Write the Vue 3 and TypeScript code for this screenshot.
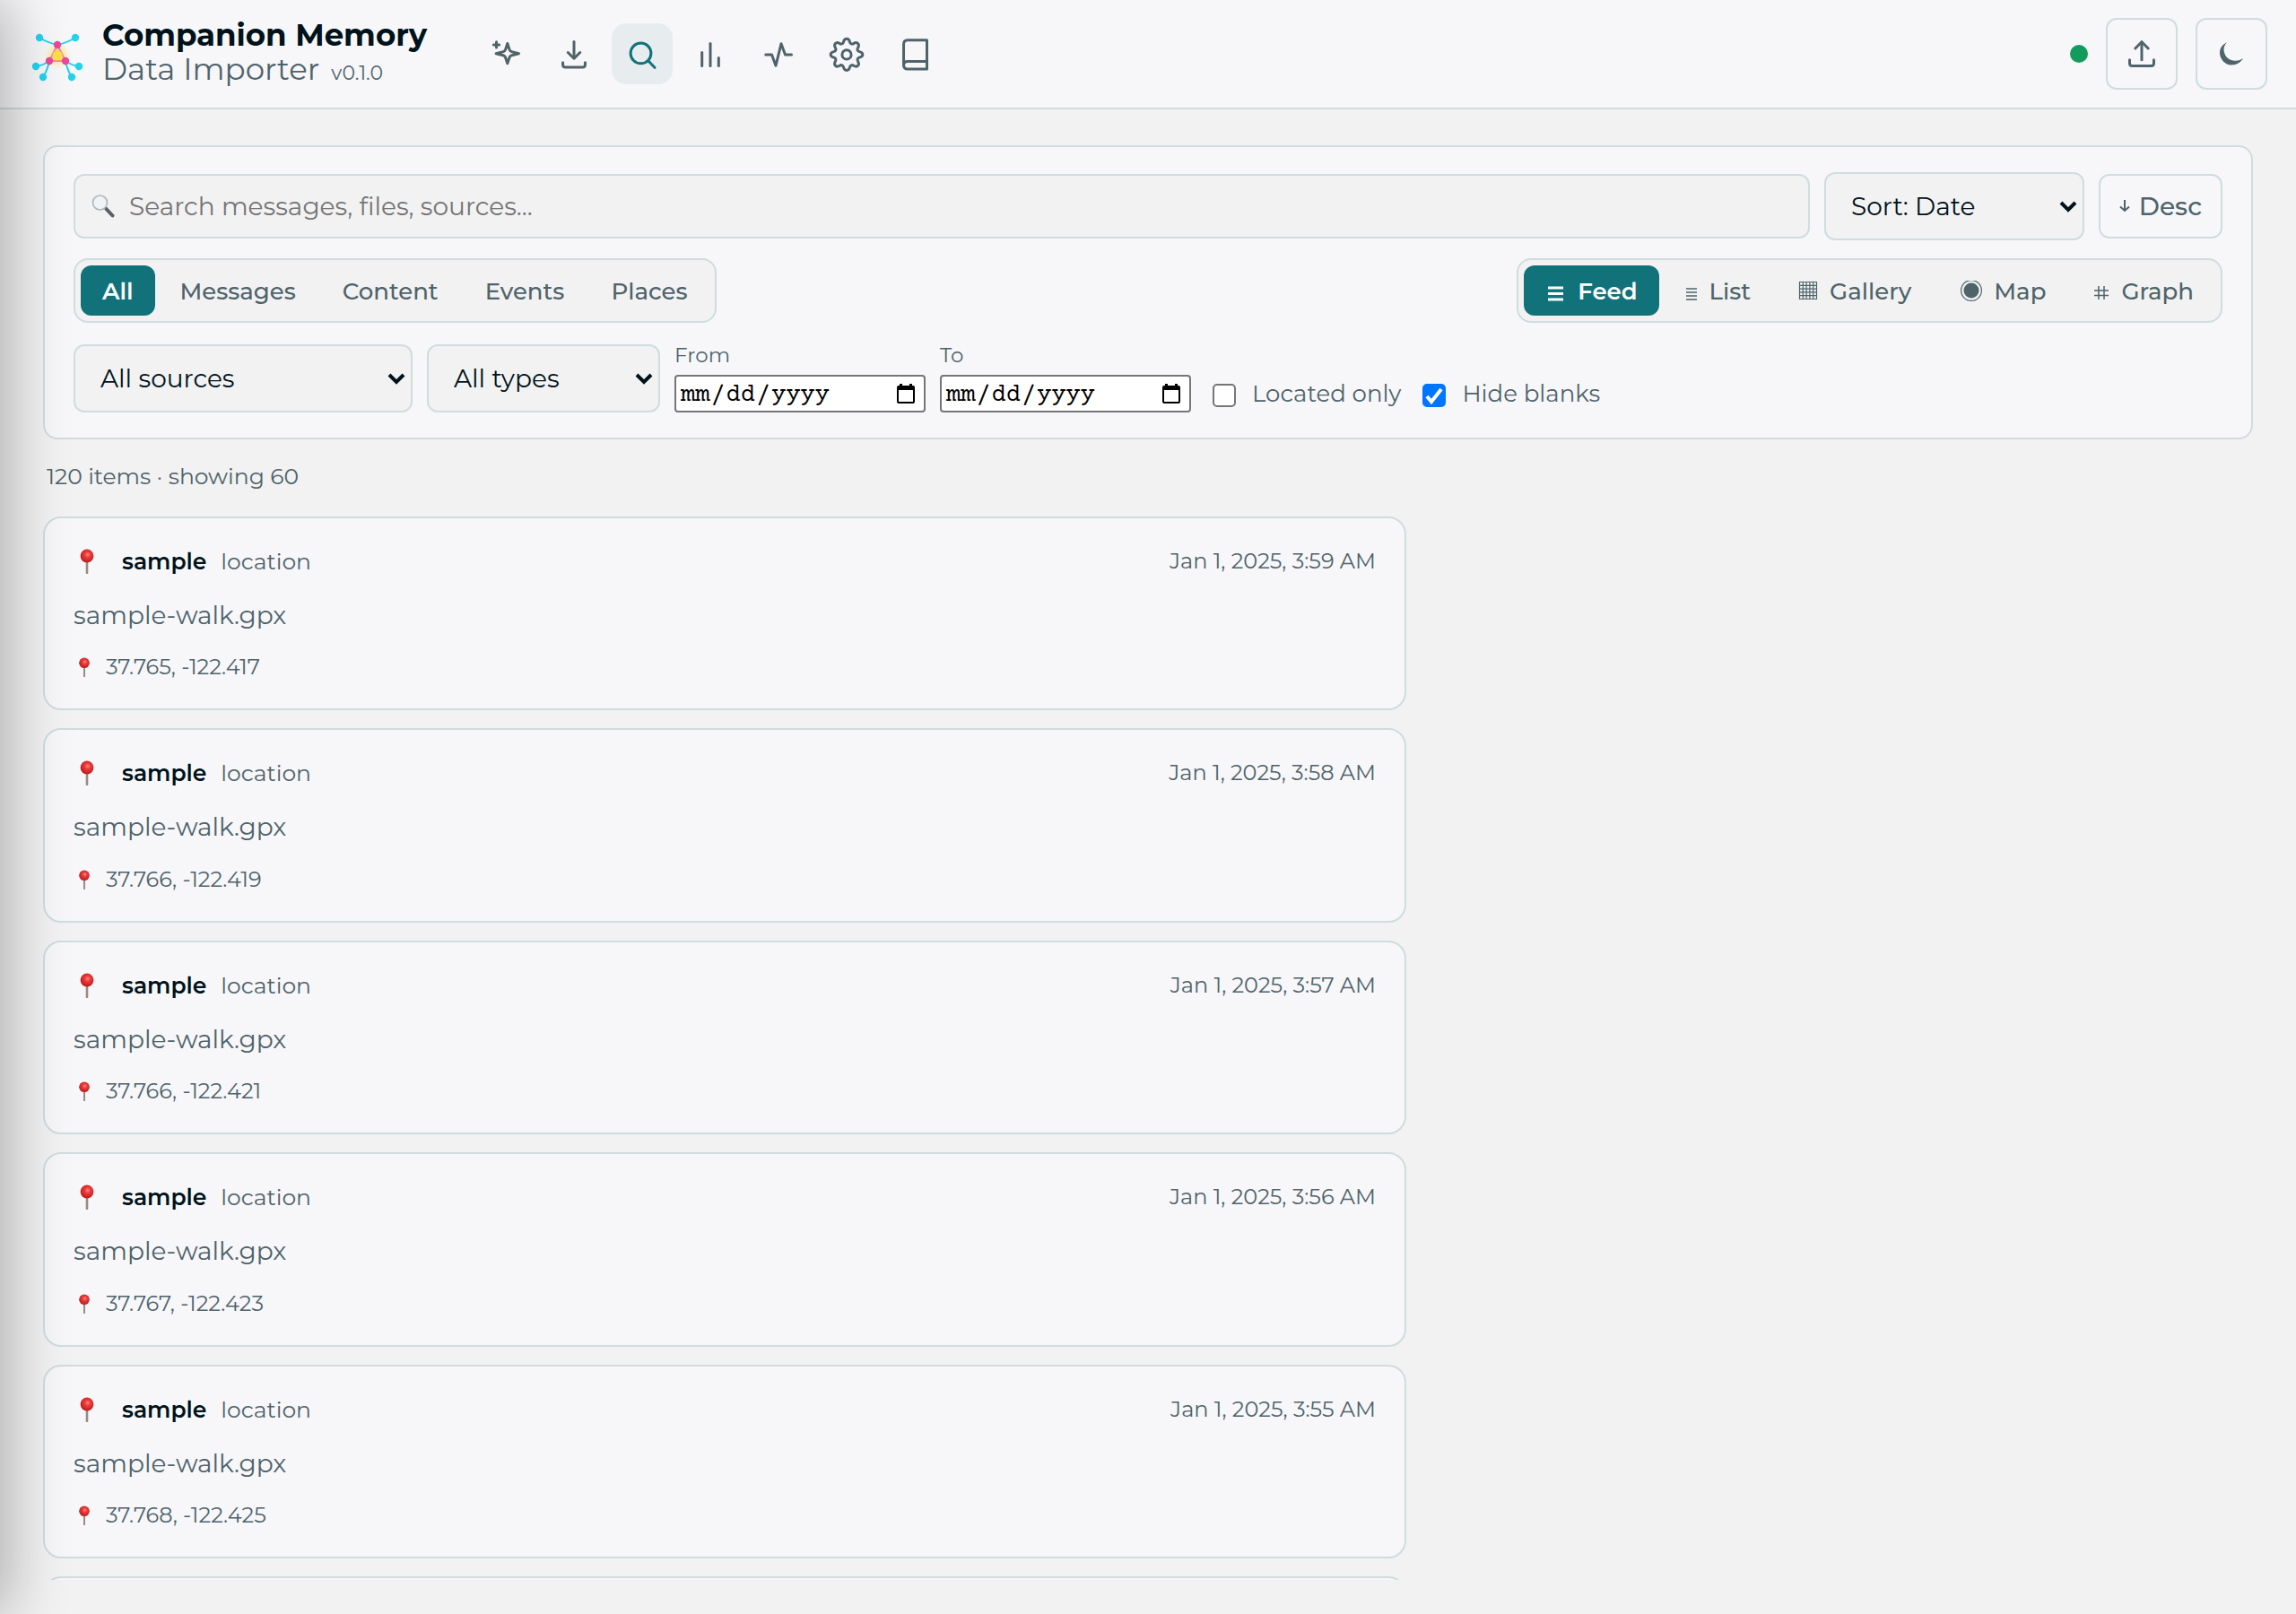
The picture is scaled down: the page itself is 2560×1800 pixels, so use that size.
<script setup lang="ts">
import { ref } from 'vue'

interface NavItem {
  label: string
  paths: string[]
}

interface FeedItem {
  time: string
  coords: string
}

const navItems: NavItem[] = [
  {
    label: 'Highlights',
    paths: [
      'M13.200 4.300l1.500 4.600q.4 1.200 1.600 1.500l5.400 1.400-5.400 1.400q-1.200.3-1.600 1.500l-1.500 4.500-1.500-4.500q-.4-1.200-1.600-1.500l-5.400-1.400 5.400-1.400q1.200-.3 1.600-1.500z',
      'M5 3.200v4.200M2.900 5.300h4.200',
    ],
  },
  { label: 'Import', paths: ['M12 3v12', 'M7.500 11l4.500 4.500L16.500 11', 'M3.700 18.500v1.500q0 2 2 2h12.600q2 0 2-2v-1.500'] },
  { label: 'Search', paths: ['M11 4a7.600 7.600 0 1 0 0 15.200a7.600 7.600 0 1 0 0-15.200', 'M16.500 17.200l4.800 5'] },
  { label: 'Statistics', paths: ['M5.800 11V21', 'M12 4.300V21', 'M18.200 15V21'] },
  { label: 'Activity', paths: ['M2.500 12.700H7L10 20.800L14 4.500L17 12.700H21.700'] },
  {
    label: 'Settings',
    paths: [
      'M12 .8c1.300 0 2 .9 2.300 2.300c.3 1.500 1.700 2 2.900 1.200c1.200-.8 2.400-.9 3.200 0s.700 2 0 3.200c-.8 1.200-.3 2.600 1.200 2.900c1.400.3 2.300 1 2.300 2.100s-.9 1.900-2.300 2.200c-1.500.3-2 1.700-1.200 2.900c.7 1.200.8 2.300 0 3.200s-2 .7-3.200 0c-1.200-.8-2.600-.3-2.900 1.200c-.3 1.400-1 2.300-2.300 2.300s-2-.9-2.300-2.300c-.3-1.500-1.700-2-2.900-1.200c-1.200.7-2.400.9-3.200 0s-.7-2 0-3.200c.8-1.200.3-2.600-1.200-2.900C1 14.400.1 13.700.1 12.500s.9-1.800 2.300-2.100c1.500-.3 2-1.700 1.200-2.900c-.7-1.200-.8-2.300 0-3.200s2-.8 3.200 0c1.200.8 2.600.3 2.900-1.200C10 1.700 10.700.8 12 .8z',
      'M12 9.200a3.400 3.400 0 1 0 0 6.800a3.400 3.400 0 1 0 0-6.800',
    ],
  },
  { label: 'Journal', paths: ['M21 1.800V23.400H6.700q-3 0-3-3V4.800q0-3 3-3z', 'M3.700 20.500q0-2.800 3-2.800H21'] },
]
const activeNav = ref('Search')

const kinds: string[] = ['All', 'Messages', 'Content', 'Events', 'Places']
const activeKind = ref('All')
const views: string[] = ['Feed', 'List', 'Gallery', 'Map', 'Graph']
const activeView = ref('Feed')

const query = ref('')
const locatedOnly = ref(false)
const hideBlanks = ref(true)

const items: FeedItem[] = [
  { time: 'Jan 1, 2025, 3:59 AM', coords: '37.765, -122.417' },
  { time: 'Jan 1, 2025, 3:58 AM', coords: '37.766, -122.419' },
  { time: 'Jan 1, 2025, 3:57 AM', coords: '37.766, -122.421' },
  { time: 'Jan 1, 2025, 3:56 AM', coords: '37.767, -122.423' },
  { time: 'Jan 1, 2025, 3:55 AM', coords: '37.768, -122.425' },
]
</script>

<template>
  <div class="app">
    <svg class="defs" width="0" height="0" aria-hidden="true">
      <defs>
        <radialGradient id="pin-head" cx="0.55" cy="0.4" r="0.6">
          <stop offset="0" stop-color="#ff8a80" />
          <stop offset="0.35" stop-color="#ef3b3b" />
          <stop offset="1" stop-color="#b71c1c" />
        </radialGradient>
        <radialGradient id="logo-glow">
          <stop offset="0.3" stop-color="#fde047" stop-opacity="0.5" />
          <stop offset="1" stop-color="#fde047" stop-opacity="0" />
        </radialGradient>
        <symbol id="pin" viewBox="0 0 16 28">
          <path d="M8 14v13" stroke="#9c8a84" stroke-width="2.600" stroke-linecap="round" />
          <circle cx="8" cy="8" r="7.400" fill="url(#pin-head)" />
        </symbol>
      </defs>
    </svg>

    <header class="topbar">
      <svg class="logo" viewBox="0 0 64 64" aria-hidden="true">
        <circle cx="32" cy="34" r="15" fill="url(#logo-glow)" />
        <path
          d="M12 14Q22 20 32 22Q42 20 52 14M8 46Q16 45 23 40Q21 50 16 58M56 46Q48 45 41 40Q43 50 48 58"
          fill="none"
          stroke="#22d3ee"
          stroke-width="2"
        />
        <path d="M32 22L23 40H41z" fill="#fcd9a0" stroke="#f58a95" stroke-width="2" />
        <circle cx="32" cy="34" r="5.500" fill="#fde047" />
        <g fill="#22d3ee">
          <circle cx="12" cy="14" r="4.200" /><circle cx="52" cy="14" r="4.200" />
          <circle cx="8" cy="46" r="4.200" /><circle cx="56" cy="46" r="4.200" />
          <circle cx="16" cy="58" r="4.200" /><circle cx="48" cy="58" r="4.200" />
        </g>
        <g fill="#ec4899">
          <circle cx="32" cy="22" r="4.200" /><circle cx="23" cy="40" r="4.200" /><circle cx="41" cy="40" r="4.200" />
        </g>
      </svg>
      <div class="brand">
        <strong>Companion Memory</strong>
        <span class="product">Data Importer <small>v0.1.0</small></span>
      </div>
      <nav class="nav">
        <button
          v-for="item in navItems"
          :key="item.label"
          type="button"
          :class="{ active: item.label === activeNav }"
          :aria-label="item.label"
          @click="activeNav = item.label"
        >
          <svg class="stroke-icon" viewBox="0 0 24 24"><path v-for="d in item.paths" :key="d" :d="d" /></svg>
        </button>
      </nav>
      <span class="status" role="status" aria-label="Connected"></span>
      <button class="tool" type="button" aria-label="Upload">
        <svg class="stroke-icon" viewBox="0 0 24 24">
          <path d="M12 3.200V16.500" /><path d="M7.200 8L12 3.200L16.800 8" /><path d="M3 16.500v2.500q0 2 2 2h14q2 0 2-2v-2.500" />
        </svg>
      </button>
      <button class="tool" type="button" aria-label="Dark theme">
        <svg width="28" height="28" viewBox="0 0 28 28">
          <path
            d="M9 1C3.500 4 1 8 1 13C1 20 7 26.500 14 26.500C20 26.500 25 23 27 19C23 22 19 22 16 21.500C9.500 20.500 5.500 15 5.500 9C5.500 6 7 3 9 1z"
            fill="currentColor"
          />
        </svg>
      </button>
    </header>

    <main class="content">
      <section class="filters">
        <div class="row">
          <label class="search">
            <svg width="28" height="28" viewBox="0 0 28 28" aria-hidden="true">
              <path d="M16 16.500L23.500 24.500" stroke="#5a5e62" stroke-width="4" stroke-linecap="round" />
              <circle cx="9.500" cy="10" r="8" fill="#eef3f6" stroke="#b0b4b8" stroke-width="1.600" />
            </svg>
            <input v-model="query" type="text" placeholder="Search messages, files, sources..." aria-label="Search" />
          </label>
          <select class="select sort" aria-label="Sort"><option>Sort: Date</option></select>
          <button class="order" type="button">
            <svg width="12" height="14" viewBox="0 0 12 14"><path d="M6 0V12M1 7.500L6 12L11 7.500" /></svg>
            Desc
          </button>
        </div>

        <div class="row spread">
          <div class="segmented">
            <button
              v-for="kind in kinds"
              :key="kind"
              type="button"
              :class="{ active: kind === activeKind }"
              @click="activeKind = kind"
            >{{ kind }}</button>
          </div>
          <div class="segmented">
            <button
              v-for="view in views"
              :key="view"
              type="button"
              :class="{ active: view === activeView }"
              @click="activeView = view"
            >
              <svg v-if="view === 'Feed'" width="24" height="24" viewBox="0 0 24 24">
                <path d="M3 8H20M3 14.500H20M3 21H20" stroke-width="3" />
              </svg>
              <svg v-else-if="view === 'List'" width="16" height="24" viewBox="0 0 16 24">
                <path d="M2 9H14M2 13H14M2 17H14M2 21H14" stroke-width="1.500" />
              </svg>
              <svg v-else-if="view === 'Gallery'" width="24" height="24" viewBox="0 0 24 24">
                <path
                  d="M2.500 1.500H21.500V20.500H2.500zM6.300 1.500V20.500M10.100 1.500V20.500M13.900 1.500V20.500M17.700 1.500V20.500M2.500 5.300H21.500M2.500 9.100H21.500M2.500 12.900H21.500M2.500 16.700H21.500"
                  stroke-width="1.200"
                />
              </svg>
              <svg v-else-if="view === 'Map'" width="28" height="24" viewBox="0 0 28 24">
                <circle cx="15" cy="11" r="11.400" stroke-width="1.200" />
                <circle cx="15" cy="11" r="8.500" fill="currentColor" stroke="none" />
              </svg>
              <svg v-else width="20" height="24" viewBox="0 0 20 24">
                <path d="M7 6V21M13 6V21M2 11H18M2 16.500H18" stroke-width="1.500" />
              </svg>
              {{ view }}
            </button>
          </div>
        </div>

        <div class="row bottom">
          <select class="select sources" aria-label="Source"><option>All sources</option></select>
          <select class="select types" aria-label="Type"><option>All types</option></select>
          <label class="date">From<input type="date" /></label>
          <label class="date">To<input type="date" /></label>
          <label class="check"><input v-model="locatedOnly" type="checkbox" />Located only</label>
          <label class="check"><input v-model="hideBlanks" type="checkbox" />Hide blanks</label>
        </div>
      </section>

      <p class="summary">120 items · showing 60</p>

      <div class="feed">
        <article v-for="item in items" :key="item.time" class="card">
          <div class="card-head">
            <svg class="pin-large" width="30" height="28"><use href="#pin" width="30" height="28" /></svg>
            <strong>sample</strong>
            <span>location</span>
            <time>{{ item.time }}</time>
          </div>
          <p class="file">sample-walk.gpx</p>
          <p class="coords">
            <svg width="24" height="22"><use href="#pin" width="24" height="22" /></svg>
            {{ item.coords }}
          </p>
        </article>
        <div class="card"></div>
      </div>
    </main>
    <div class="drawer" aria-hidden="true"></div>
  </div>
</template>

<style>
body {
  margin: 0;
  background: #f2f2f2;
}
</style>

<style scoped>
.app {
  --panel: #f7f7fa;
  --field: #f2f2f2;
  --line: #d0dcde;
  --ink: #00131a;
  --muted: #4f636a;
  --teal: #11727a;
  position: relative;
  display: flex;
  flex-direction: column;
  height: 100vh;
  overflow: hidden;
  background: var(--field);
  color: var(--muted);
  font-family: Montserrat, Inter, sans-serif;
  font-size: 25px;
}

.app *,
.drawer {
  box-sizing: border-box;
}

.defs {
  position: absolute;
}

button,
select,
.search input {
  margin: 0;
  font-family: inherit;
  color: inherit;
}

.topbar {
  display: flex;
  flex: none;
  align-items: center;
  padding: 20px 32px;
  background: var(--panel);
  border-bottom: 2px solid var(--line);
}

.logo {
  width: 64px;
  height: 64px;
}

.brand {
  display: flex;
  flex-direction: column;
  margin-left: 18px;
  padding-bottom: 4px;
  line-height: 38px;
}

.brand strong {
  color: var(--ink);
  font-size: 34px;
  font-weight: 700;
}

.product {
  font-size: 34px;
}

.product small {
  margin-left: 4px;
  font-size: 22px;
  line-height: 22px;
}

.nav {
  display: flex;
  gap: 8px;
  margin-left: 54px;
}

.nav button {
  display: grid;
  place-items: center;
  width: 68px;
  height: 68px;
  padding: 0;
  background: none;
  border: 0;
  border-radius: 16px;
}

.nav button.active {
  background: #e7edef;
  color: var(--teal);
}

.stroke-icon {
  width: 36px;
  height: 36px;
  overflow: visible;
  fill: none;
  stroke: currentColor;
  stroke-width: 2;
  stroke-linecap: round;
  stroke-linejoin: round;
}

.status {
  width: 20px;
  height: 20px;
  margin-left: auto;
  background: #119c5b;
  border-radius: 50%;
}

.tool {
  display: grid;
  place-items: center;
  width: 80px;
  height: 80px;
  margin-left: 20px;
  padding: 0;
  background: var(--panel);
  border: 2px solid var(--line);
  border-radius: 12px;
}

.content {
  display: flex;
  flex: 1;
  flex-direction: column;
  min-height: 0;
  padding: 40px 48px 38px;
}

.filters {
  display: flex;
  flex-direction: column;
  gap: 20px;
  padding: 28px 32px;
  background: var(--panel);
  border: 2px solid var(--line);
  border-radius: 16px;
}

.row {
  display: flex;
  align-items: center;
  gap: 16px;
}

.spread {
  justify-content: space-between;
}

.bottom {
  align-items: flex-end;
}

.search {
  display: flex;
  flex: 1;
  align-items: center;
  gap: 14px;
  height: 72px;
  padding: 0 18px;
  background: var(--field);
  border: 2px solid var(--line);
  border-radius: 12px;
}

.search input {
  flex: 1;
  padding: 0;
  background: none;
  border: 0;
  font-size: 28px;
}

.search input::placeholder {
  color: #757575;
}

.search svg,
.order svg,
.segmented svg {
  flex: none;
}

.search svg,
.segmented svg {
  fill: none;
}

.select {
  height: 76px;
  padding: 0 28px;
  appearance: none;
  background: var(--field) url("data:image/svg+xml,%3Csvg xmlns='http://www.w3.org/2000/svg' width='20' height='14'%3E%3Cpath d='M2 3l8 8 8-8' fill='none' stroke='%2300131a' stroke-width='4'/%3E%3C/svg%3E") no-repeat right 6px center;
  border: 2px solid var(--line);
  border-radius: 12px;
  color: var(--ink);
  font-size: 28px;
}

.sort {
  width: 290px;
}

.sources {
  width: 378px;
}

.types {
  width: 260px;
}

.order {
  display: flex;
  align-items: center;
  justify-content: center;
  gap: 10px;
  width: 138px;
  height: 72px;
  padding: 0;
  background: var(--panel);
  border: 2px solid var(--line);
  border-radius: 12px;
  font-size: 28px;
  font-weight: 500;
}

.order svg {
  fill: none;
  stroke: currentColor;
  stroke-width: 2;
}

.segmented {
  display: flex;
  gap: 4px;
  height: 72px;
  padding: 6px;
  background: var(--field);
  border: 2px solid var(--line);
  border-radius: 16px;
}

.segmented button {
  display: flex;
  align-items: center;
  gap: 12px;
  padding: 2px 24px 0;
  background: none;
  border: 0;
  border-radius: 12px;
  font-size: 26px;
  font-weight: 500;
}

.segmented button.active {
  background: var(--teal);
  color: #fff;
  font-weight: 600;
}

.segmented svg {
  stroke: currentColor;
}

.date {
  display: flex;
  flex-direction: column;
  gap: 6px;
  font-size: 23px;
  line-height: 32px;
}

.date input {
  width: 280px;
  height: 42px;
  padding: 4px 4px 0;
  background: #fff;
  border: 2px solid #767676;
  border-radius: 4px;
  color: #000;
  font-family: "Courier Prime", "Nimbus Mono PS", "FreeMono", "Liberation Mono", monospace;
  font-size: 27px;
}

.date input::-webkit-calendar-picker-indicator {
  width: 20px;
  height: 22px;
  padding: 0;
  margin: 0 6px 4px 0;
  background: url("data:image/svg+xml,%3Csvg xmlns='http://www.w3.org/2000/svg' width='20' height='22'%3E%3Cpath d='M3 0h3v2h8V0h3v2h1q2 0 2 2v16q0 2-2 2H2q-2 0-2-2V4q0-2 2-2h1zM2 7v13h16V7z' fill-rule='evenodd'/%3E%3C/svg%3E") no-repeat center;
}

.check {
  display: flex;
  align-items: center;
  gap: 18px;
  height: 42px;
  margin-left: 8px;
  font-size: 26px;
}

.check input {
  width: 26px;
  height: 26px;
  margin: 4px 0 0;
  appearance: none;
  background: #fff;
  border: 2px solid #767676;
  border-radius: 5px;
}

.check input:checked {
  background: #0075ff url("data:image/svg+xml,%3Csvg xmlns='http://www.w3.org/2000/svg' width='26' height='26'%3E%3Cpath d='M5 14l5 6L21 6' fill='none' stroke='white' stroke-width='4'/%3E%3C/svg%3E") no-repeat center;
  border-color: #0075ff;
}

.summary {
  margin: 21px 0 25px;
  padding-left: 4px;
  line-height: 40px;
}

.feed {
  display: flex;
  flex: 1;
  flex-direction: column;
  gap: 20px;
  width: 100%;
  max-width: 1520px;
  min-height: 0;
  overflow: hidden;
}

.card {
  flex: none;
  padding: 30px 32px 28px;
  background: var(--panel);
  border: 2px solid var(--line);
  border-radius: 20px;
}

.card-head {
  display: flex;
  align-items: center;
  gap: 16px;
  line-height: 36px;
}

.pin-large {
  margin-right: 8px;
}

.card-head strong {
  color: var(--ink);
  font-weight: 600;
}

.card-head time {
  margin-left: auto;
  font-size: 24px;
}

.file {
  margin: 24px 0 22px;
  font-size: 28px;
  line-height: 1.3;
}

.coords {
  display: flex;
  align-items: center;
  gap: 12px;
  margin: 0;
  font-size: 24px;
  line-height: 36px;
}

/* closed drawer parked outside the left edge; only its shadow shows */
.drawer {
  position: absolute;
  top: 0;
  right: 100%;
  width: 600px;
  height: 100%;
  box-shadow: 8px 0 64px rgba(0, 0, 0, 0.3);
  pointer-events: none;
}
</style>
